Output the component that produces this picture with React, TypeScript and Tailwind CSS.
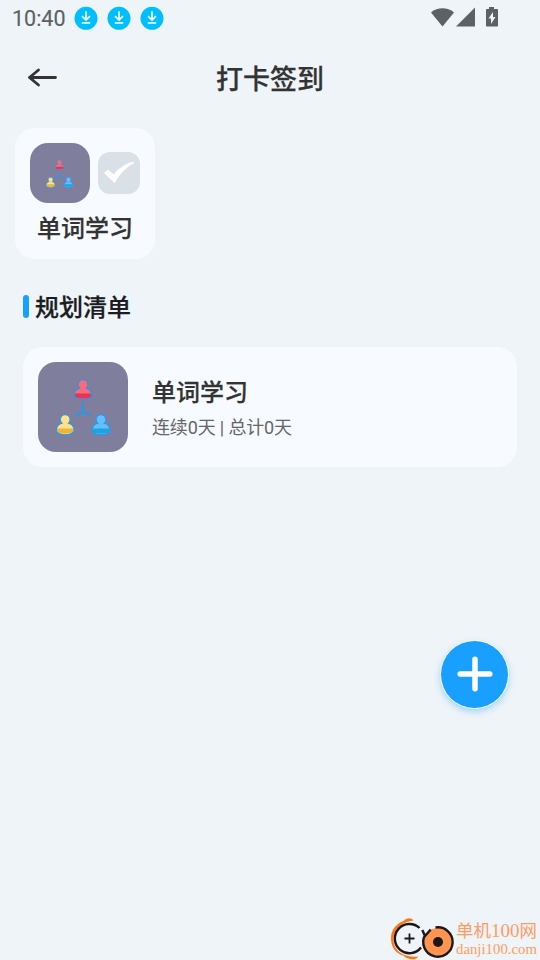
const DownloadBadge = () => (
  <svg className="h-6 w-6" viewBox="0 0 24 24" fill="none">
    <circle cx="12" cy="12.300" r="11.5" fill="#00bfff" />
    <path d="M12 5.300v8.500M8 10.100l4 4 4-4M7.800 16.900h8.400" stroke="#f2faff" strokeWidth="1.7" />
  </svg>
)

const Person = ({ x, y, light, dark }: { x: number; y: number; light: string; dark: string }) => (
  <g transform={`translate(${x} ${y})`}>
    <path d="M-3 7.300C-6.500 8-8.900 11-8.900 14.500C-8.900 16.800-5 18.800 0 18.800S8.900 16.800 8.900 14.500C8.900 11 6.500 8 3 7.300Z" fill={light} />
    <path d="M-8.300 12.500H8.300V15C7.500 18.500-7.500 18.500-8.300 15Z" fill={dark} />
    <path d="M-3 7.300C-6.500 8-8.900 11-8.900 14.500C-8.900 16.800-5 18.800 0 18.800S8.900 16.800 8.900 14.500C8.900 11 6.500 8 3 7.300" stroke="#169bfa" strokeWidth="1.100" fill="none" />
    <circle cx="0" cy="3.500" r="4.800" fill={light} stroke="#169bfa" strokeWidth="1" />
    <path d="M-2.500 6.800H2.500V9H-2.500Z" fill={light} />
  </g>
)

const TeamIcon = ({ className }: { className: string }) => (
  <svg className={className} viewBox="0 0 90 90" fill="none">
    <path d="M45 41v9.500M45 49.500l-7.500 4.500M45 49.500l8 4.500" stroke="#169bfa" strokeWidth="1.800" />
    <Person x={45} y={19} light="#ff6878" dark="#dc3859" />
    <Person x={27.2} y={54} light="#ffe08d" dark="#edb437" />
    <Person x={63} y={54} light="#66bdff" dark="#1ba5dc" />
  </svg>
)

const StatusBar = () => (
  <div className="flex h-[37px] items-center justify-between pl-3 pr-[41px]">
    <div className="flex items-center">
      <span className="w-[61.500px] font-['Roboto'] text-[21.500px] leading-6 text-[#5d6163] [-webkit-text-stroke:0.150px]">10:40</span>
      <div className="mb-px flex gap-[9px]">
        <DownloadBadge />
        <DownloadBadge />
        <DownloadBadge />
      </div>
    </div>
    <svg className="mb-[2px] h-[22px] w-[68px]" viewBox="0 0 68 22" fill="#5d6163">
      <path d="M0 5.500C6.500-.1 16.500-.1 23 5.500L11.500 19.500Z" />
      <path d="M44 .500V19.500H25Z" />
      <path fillRule="evenodd" d="M58 0h5v2h3.200q.8 0 .8.800v15.900q0 .800-.800.800H55.800q-.8 0-.8-.8V2.800q0-.8.8-.8H58ZM62 5l-4.500 6.500H60V17l4.500-7H62Z" />
    </svg>
  </div>
)

const HabitTile = ({ name }: { name: string }) => (
  <div className="ml-[15px] flex h-[131px] w-[140px] flex-col items-center rounded-[20px] bg-[#f7fbff] pt-[15px]">
    <div className="flex items-center gap-2">
      <div className="flex h-[60px] w-[60px] items-center justify-center rounded-[18px] bg-[#807e9d]">
        <TeamIcon className="mr-px h-[45px] w-[45px]" />
      </div>
      <div className="h-[42px] w-[42px] rounded-[12px] bg-[#d9e0e6]">
        <svg viewBox="0 0 42 42" fill="#fff">
          <path d="M6 21L10 17.500L15.800 22.500C20 17 27 11.500 35.500 9.800L36 11.300C28 15 22 22 16.800 31.300Z" />
        </svg>
      </div>
    </div>
    <div className="mt-[6px] text-2xl font-medium leading-9 text-[#333] [-webkit-text-stroke:0.250px]">{name}</div>
  </div>
)

const HabitRow = ({ name, streak, total }: { name: string; streak: number; total: number }) => (
  <div className="mx-[23px] mt-[23px] flex h-[120px] items-center gap-6 rounded-[20px] bg-[#f7fbff] px-[15px]">
    <div className="h-[90px] w-[90px] rounded-[18px] bg-[#807e9d]">
      <TeamIcon className="h-[90px] w-[90px]" />
    </div>
    <div className="pt-[5px]">
      <div className="text-2xl font-medium leading-9 text-[#333] [-webkit-text-stroke:0.250px]">{name}</div>
      <div className="font-['Roboto','Noto_Sans_CJK_SC',sans-serif] text-lg leading-[37px] tracking-[-0.150px] text-[#666]">
        连续{streak}天 | 总计{total}天
      </div>
    </div>
  </div>
)

const Watermark = () => (
  <div className="absolute bottom-0 left-[389px] flex h-[44px] w-[151px]">
    <svg className="h-[44px] w-[67px] shrink-0" viewBox="0 0 67 44" fill="none">
      <path d="M24.500 4.500C22.500 1.500 17.500 1.500 14.500 5C5 8.500 1 17 2.200 25C3 33 8 37.500 14 39.500C18 43 26 45.500 29.500 40.500C20 41.500 11 38.500 7.500 33C2.500 26 4 16 10 10.500C14 7 19 5.500 24.500 4.500Z" fill="#ff7614" />
      <path d="M30.500 12A14.600 14.600 0 1 0 32 31.500" stroke="#1c1719" strokeWidth="2.400" />
      <path d="M20.500 17.500v10M15.500 22.500h10" stroke="#1c1719" strokeWidth="1.800" />
      <circle cx="49" cy="26" r="14" fill="#ff9450" />
      <path d="M46.500 11.500A14.700 14.700 0 1 1 36 19M33.300 14l2.700 6 5.700-6.500" stroke="#1c1719" strokeWidth="2.400" />
      <circle cx="49" cy="26" r="5" fill="#1c1719" />
    </svg>
    <div className="whitespace-nowrap font-['Liberation_Serif','Noto_Sans_CJK_SC',serif] text-[#ff9d64]">
      <div className="mt-[4px] text-[17.500px] leading-[22px]">单机<span className="text-[19px]">100</span>网</div>
      <div className="-mt-px text-[14.800px] leading-[16px]">danji100.com</div>
    </div>
  </div>
)

export default function App() {
  return (
    <div className="relative h-[960px] w-[540px] overflow-hidden bg-[#eef4f8] font-['Noto_Sans_CJK_SC',sans-serif]">
      <StatusBar />
      <header className="grid h-[91px] grid-cols-[60px_1fr_60px] items-start pt-[21px]">
        <svg className="ml-[27px] mt-[10px] h-[20px] w-[31px]" viewBox="0 0 31 20" fill="none" stroke="#333" strokeWidth="2.800" strokeLinecap="round" strokeLinejoin="round">
          <path d="M28.500 9.500H2.500M11.500 2L2.500 9.500l9 7.500" />
        </svg>
        <h1 className="text-center text-[27px] font-medium leading-10 text-[#333] [-webkit-text-stroke:0.250px]">打卡签到</h1>
      </header>
      <HabitTile name="单词学习" />
      <div className="ml-[23px] mt-[29px] flex h-9 items-center gap-1.5">
        <span className="h-[23px] w-1.5 rounded-full bg-[#199fff]" />
        <h2 className="text-2xl font-medium leading-9 text-[#1a1c1e] [-webkit-text-stroke:0.250px]">规划清单</h2>
      </div>
      <HabitRow name="单词学习" streak={0} total={0} />
      <button className="absolute left-[440px] top-[640px] flex h-[69px] w-[69px] items-center justify-center rounded-full border-[1.500px] border-white bg-[#199fff] shadow-[0_3px_6px_rgba(25,159,255,0.35)]">
        <svg className="mb-px h-9 w-9" viewBox="0 0 36 36" stroke="#fff" strokeWidth="5.500" strokeLinecap="round">
          <path d="M18 3.200v29.600M3.200 18h29.600" />
        </svg>
      </button>
      <Watermark />
    </div>
  )
}
